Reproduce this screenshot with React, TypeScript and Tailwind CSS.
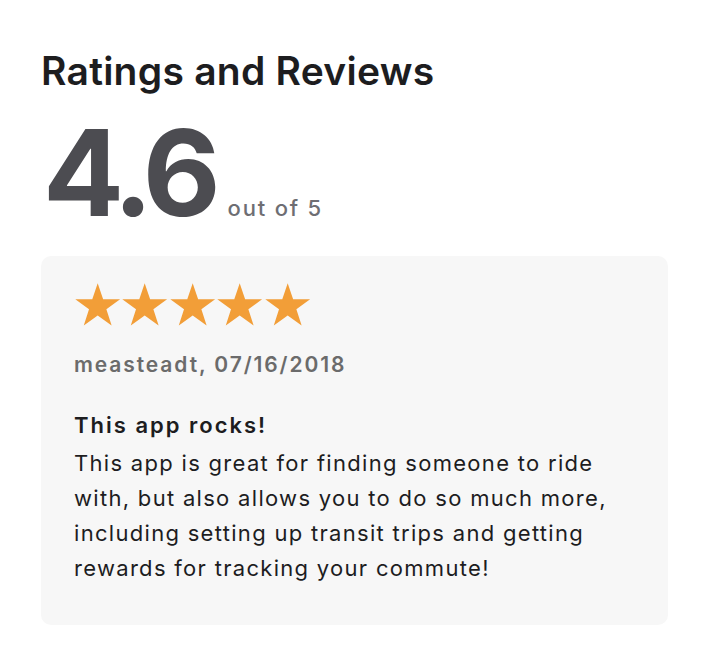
function Star() {
  return (
    <svg width="47.4" height="46" viewBox="0 0 24 23.3" className="block">
      <path d="M12 0.6l2.75 8.15h8.6l-6.95 5.05 2.65 8.2L12 16.95 4.95 22l2.65-8.2L0.65 8.75h8.6z" fill="#f29e38" />
    </svg>
  )
}

export default function App() {
  return (
    <div className="min-h-screen bg-white font-['Inter','Liberation_Sans',sans-serif] px-[41px] pt-[47px]">
      <h1 className="text-[39px] leading-[48px] font-semibold text-[#1d1d1f] tracking-[0.25px]">Ratings and Reviews</h1>

      <div className="flex items-baseline gap-[14px] mt-[18px] pl-[2px] h-[120px]">
        <span className="text-[120px] leading-[120px] font-bold text-[#4c4c51] tracking-[-7px]">4.6</span>
        <span className="text-[22px] font-medium text-[#6e6e73] tracking-[1.8px]">out of 5</span>
      </div>

      <div className="mt-[23px] w-[627px] rounded-[10px] bg-[#f7f7f7] pl-[33px] pr-[20px] pt-[26px] pb-[39px]">
        <div className="flex">
          <Star />
          <Star />
          <Star />
          <Star />
          <Star />
        </div>
        <div className="mt-[23px] text-[21px] leading-[28px] font-semibold text-[#6b6b6b] tracking-[1.9px]">measteadt, 07/16/2018</div>
        <div className="mt-[28px] text-[22px] text-[#1d1d1f]">
          <div className="leading-[36px] font-semibold tracking-[2px]">This app rocks!</div>
          <p className="mt-[3px] leading-[35px] tracking-[1.3px]">
            This app is great for finding someone to ride with, but also allows you to do so much more, including setting up transit trips and getting rewards for tracking your commute!
          </p>
        </div>
      </div>
    </div>
  )
}
